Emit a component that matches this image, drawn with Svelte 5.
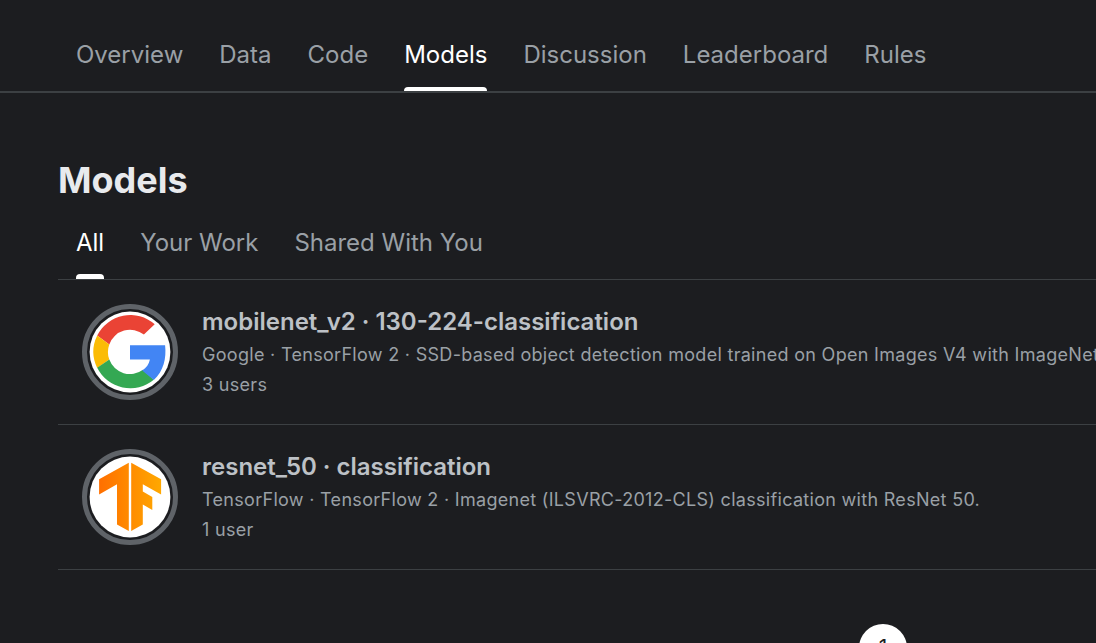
<script>
  const nav = ['Overview', 'Data', 'Code', 'Models', 'Discussion', 'Leaderboard', 'Rules'];
  const filters = ['All', 'Your Work', 'Shared With You'];
  const models = [
    {
      logo: 'google',
      title: 'mobilenet_v2 · 130-224-classification',
      detail: 'Google · TensorFlow 2 · SSD-based object detection model trained on Open Images V4 with ImageNet',
      users: '3 users'
    },
    {
      logo: 'tensorflow',
      title: 'resnet_50 · classification',
      detail: 'TensorFlow · TensorFlow 2 · Imagenet (ILSVRC-2012-CLS) classification with ResNet 50.',
      users: '1 user'
    }
  ];
  let page = $state('Models');
  let filter = $state('All');
</script>

<div class="screen">
  <nav class="tabs main">
    {#each nav as name}
      <button class:active={page === name} onclick={() => (page = name)}>{name}</button>
    {/each}
  </nav>
  <main>
    <h1>Models</h1>
    <div class="tabs sub">
      {#each filters as name}
        <button class:active={filter === name} onclick={() => (filter = name)}>{name}</button>
      {/each}
    </div>
    <ul>
      {#each models as model}
        <li>
          <svg class="avatar" viewBox="0 0 96 96" aria-hidden="true">
            <circle cx="48" cy="48" r="45.5" fill="none" stroke="#5f6368" stroke-width="5" />
            <circle cx="48" cy="48" r="40.4" fill="#fff" />
            {#if model.logo === 'google'}
              <path fill="#ea4335" d="M15.2 31.6A37 37 0 0 1 72.7 20.2L61.9 30.6A22 22 0 0 0 27.3 40.4Z" />
              <path fill="#fbbc05" d="M15.2 31.6A37 37 0 0 0 15.2 64L27.3 55.6A22 22 0 0 1 27.3 40.4Z" />
              <path fill="#34a853" d="M15.2 63.8A37 37 0 0 0 71.8 75.8L61 65.8A22 22 0 0 1 27.3 55.6Z" />
              <path fill="#4285f4" d="M48 41.2H83.1C84.6 54.5 81.5 67 71.8 75.9L60.2 66.5C64.5 63.5 67 60 67.9 55.4H48Z" />
            {:else}
              <defs>
                <linearGradient id="orange" gradientUnits="userSpaceOnUse" x1="17" y1="0" x2="79" y2="0">
                  <stop offset="0" stop-color="#ff6f00" />
                  <stop offset="1" stop-color="#ffa800" />
                </linearGradient>
              </defs>
              <path fill="url(#orange)" d="M46.8 13.7V82.1L35 75.4V35.2L17.1 45.5V30.3Z" />
              <path fill="url(#orange)" d="M49.2 13.7L79.1 30.3V45.5L60.8 35.2V42.4L70.3 47.9V60.9L60.8 55.5V75.4L49.2 82.1Z" />
            {/if}
          </svg>
          <div class="info">
            <h2>{model.title}</h2>
            <p>{model.detail}</p>
            <p>{model.users}</p>
          </div>
        </li>
      {/each}
    </ul>
    <div class="pager"><button>1</button></div>
  </main>
</div>

<style>
  :global(body) {
    background: #1c1d20;
    overflow: hidden;
  }
  .screen {
    box-sizing: border-box;
    width: 1096px;
    height: 643px;
    overflow: hidden;
    background: #1c1d20;
    font-family: Inter, sans-serif;
    color: #9aa0a6;
  }
  button {
    border: 0;
    padding: 0;
    background: none;
    color: inherit;
    font: inherit;
  }
  .tabs {
    display: flex;
    box-sizing: border-box;
    gap: 36px;
  }
  .tabs button {
    display: flex;
    flex-direction: column;
    justify-content: space-between;
    font-size: 24px;
    line-height: 36px;
    white-space: nowrap;
  }
  .tabs button::after {
    content: '';
    width: 100%;
    height: 4px;
    border-radius: 4px 4px 0 0;
  }
  .tabs.sub button::after {
    height: 5px;
  }
  .tabs .active {
    color: #fff;
  }
  .tabs .active::after {
    background: #fff;
  }
  .main {
    height: 93px;
    padding: 37px 0 0 76px;
    border-bottom: 2px solid #3c4043;
  }
  main {
    padding: 69px 0 0 58px;
  }
  h1 {
    margin: 0;
    font-size: 36px;
    font-weight: 700;
    line-height: 36px;
    color: #e8eaed;
  }
  .sub {
    height: 82px;
    padding: 27px 0 0 18px;
    border-bottom: 1px solid #3c4043;
  }
  ul {
    margin: 0;
    padding: 0;
    list-style: none;
  }
  li {
    display: flex;
    gap: 24px;
    padding: 24px;
    border-bottom: 1px solid #3c4043;
  }
  .avatar {
    flex: none;
    width: 96px;
    height: 96px;
  }
  .info {
    flex: none;
    white-space: nowrap;
  }
  h2 {
    margin: 0;
    font-size: 24px;
    font-weight: 600;
    line-height: 36px;
    color: #bdc1c6;
  }
  p {
    margin: 0;
    font-size: 18px;
    line-height: 30px;
    letter-spacing: 0.3px;
  }
  .pager {
    display: flex;
    padding: 54px 0 0 801px;
  }
  .pager button {
    width: 48px;
    height: 48px;
    border-radius: 50%;
    background: #fff;
    color: #202124;
    font-size: 21px;
    line-height: 48px;
  }
</style>
